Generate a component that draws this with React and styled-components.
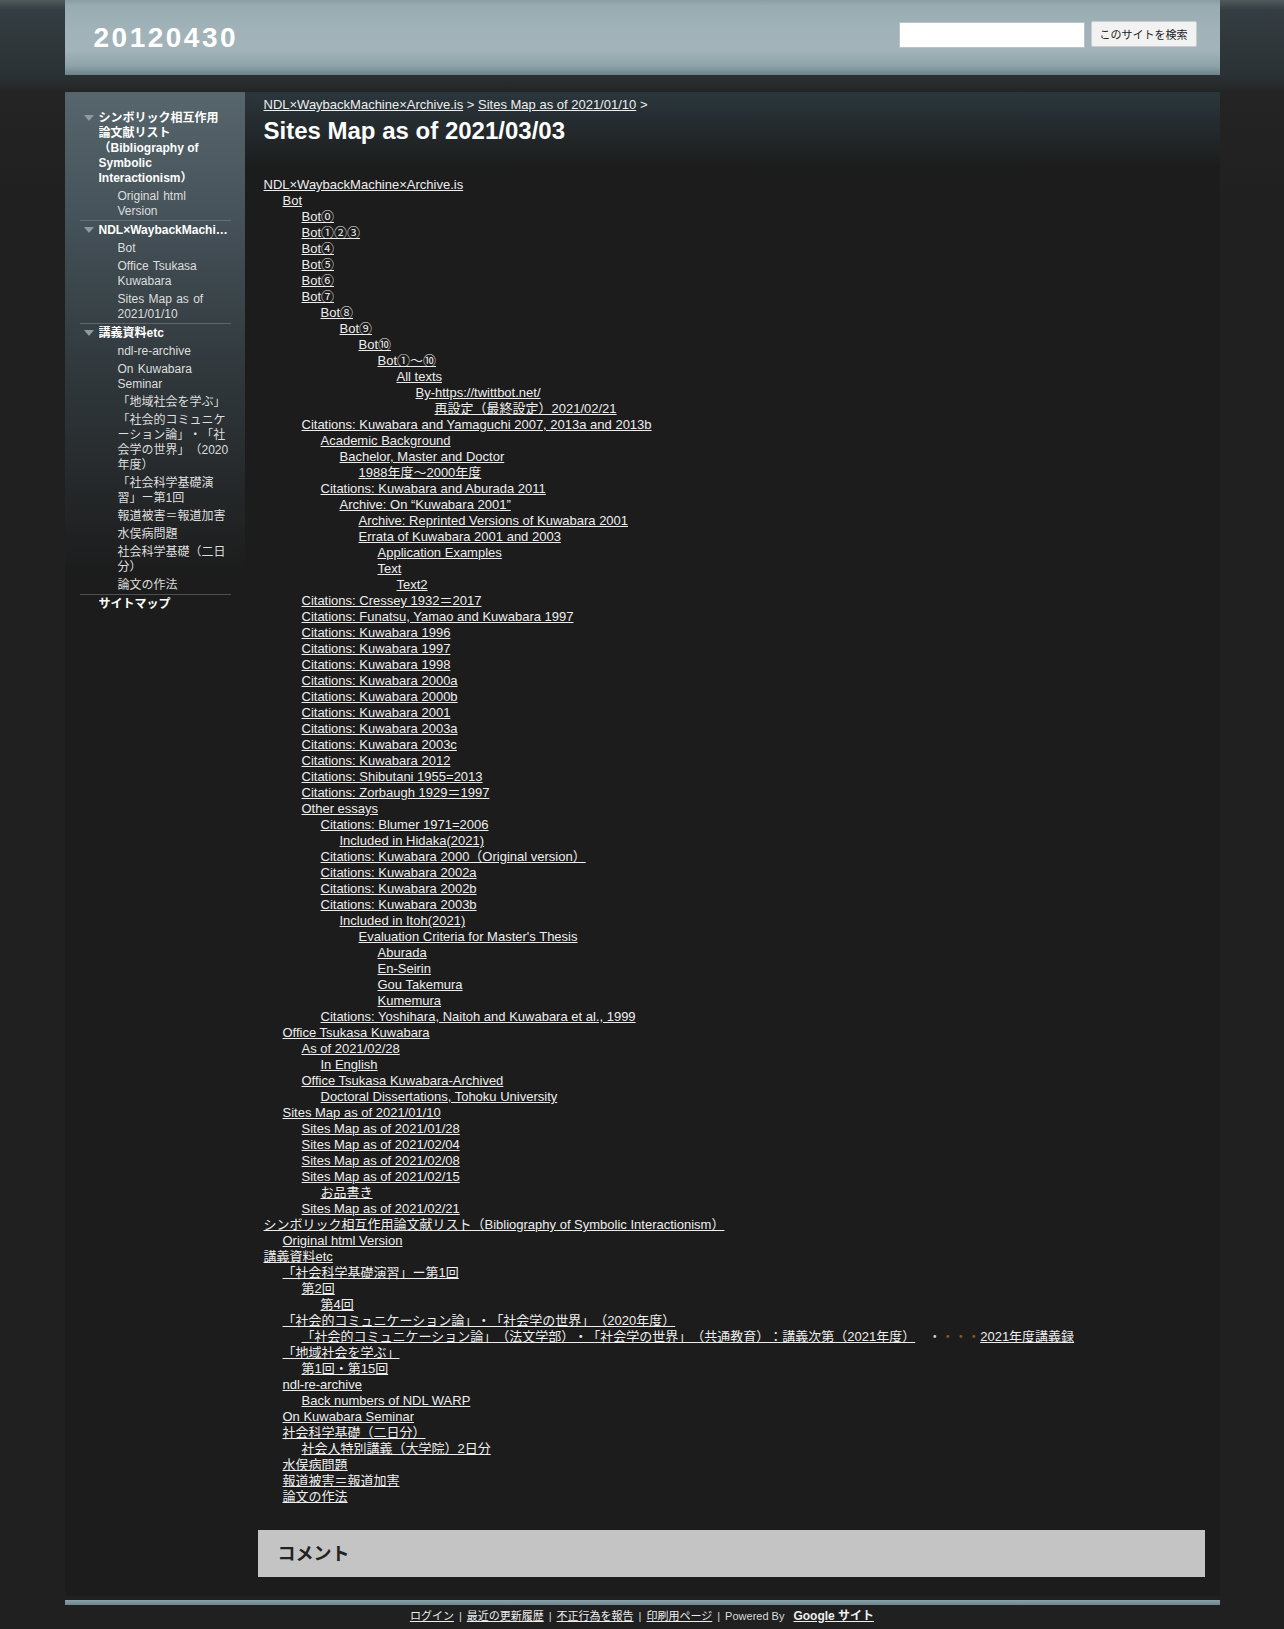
import React from 'react'
import styled, { createGlobalStyle } from 'styled-components'

const GlobalStyle = createGlobalStyle`
body{
  margin:0;
  background:#202020 linear-gradient(#52595c 0px,#343d42 10px,#2b3235 74px,#242424 92px,#202020 200px) no-repeat;
  font-family:"Liberation Sans","Noto Sans CJK JP",sans-serif;
  color:#eee;
  text-spacing-trim:space-all;
}
a{color:#eee;}
`;

const Header = styled.div`
width:1155px;
height:75px;
margin:0 auto;
box-sizing:border-box;
padding:0 23px 0 29px;
display:flex;
align-items:center;
justify-content:space-between;
background:linear-gradient(#8a9ea5 0px,#98acb2 6px,#a1b3b8 30px,#a2b4b9 50px,#8ea3a9 66px,#6c8389 75px);`;

const SiteTitle = styled.div`
font-size:28px;
font-weight:bold;
letter-spacing:2.5px;
color:#fff;`;

const SearchForm = styled.div`
display:flex;
gap:6px;
margin-bottom:6px;`;

const SearchInput = styled.input`
width:186px;
height:26px;
box-sizing:border-box;
border:1px solid #b8c3c7;
background:#fff;`;

const SearchButton = styled.button`
height:26px;
padding:0 8px;
margin-top:-1px;
border:1px solid #c9cccd;
border-radius:2px;
background:#f2f2f2;
color:#222;
font-size:11px;
font-family:"Liberation Sans","Noto Sans CJK JP",sans-serif;`;

const Main = styled.div`
width:1155px;
margin:17px auto 0;
display:flex;`;

const Sidebar = styled.div`
width:180px;
flex:none;
box-sizing:border-box;
padding:17px 14px 0 15px;
background:linear-gradient(#57666c 0px,#46535a 120px,#30383c 280px,#1c1c1c 480px);
font-size:12px;
line-height:15px;`;

const Section = styled.div`
border-bottom:${p => (p.$last ? 'none' : '1px solid rgba(150,160,165,0.4)')};`;

const TopItem = styled.div`
display:flex;
padding:1.5px 0;
font-weight:bold;
color:#fff;`;

const Arrow = styled.span`
width:19px;
height:15px;
flex:none;
display:flex;
align-items:center;
padding-left:4px;
box-sizing:border-box;`;

const TopText = styled.span`
flex:1;
min-width:0;
overflow:hidden;
text-overflow:ellipsis;
padding-right:2px;`;

const SubItem = styled.div`
padding:1.5px 2px 1.5px 38px;
word-spacing:1px;
color:#dedede;`;

const Content = styled.div`
flex:1;
box-sizing:border-box;
padding:5px 15px 19px 19px;
background:linear-gradient(#2b373d 0px,#1c1c1c 75px);
font-size:13px;
line-height:16px;`;

const Breadcrumb = styled.div`
color:#eee;`;

const PageTitle = styled.h1`
margin:4px 0 0;
font-size:24px;
line-height:28px;
font-weight:bold;
color:#fff;`;

const Tree = styled.div`
margin-top:32px;`;

const Row = styled.div`
padding-left:${p => p.$level * 19}px;
white-space:nowrap;`;

const Dot = styled.span`
color:${p => (p.$dim ? '#8a5a26' : '#cfcfcf')};`;

const CommentBox = styled.div`
margin:25px 0 0 -6px;
height:47px;
box-sizing:border-box;
padding:0 20px;
display:flex;
align-items:center;
background:#c4c4c4;
color:#222;
font-size:18px;
font-weight:bold;`;

const FooterBar = styled.div`
width:1155px;
height:5px;
margin:4px auto 0;
background:linear-gradient(#8aa2a8,#6b868e);`;

const Footer = styled.div`
display:flex;
justify-content:center;
align-items:center;
gap:5px;
padding:4px 0 6px;
font-size:11px;
line-height:14px;
color:#ddd;`;

const GoogleLink = styled.a`
font-weight:bold;
font-size:12px;
margin-left:4px;`;

const tree = [
  [0, 'NDL×WaybackMachine×Archive.is'],
  [1, 'Bot'],
  [2, 'Bot⓪'],
  [2, 'Bot①②③'],
  [2, 'Bot④'],
  [2, 'Bot⑤'],
  [2, 'Bot⑥'],
  [2, 'Bot⑦'],
  [3, 'Bot⑧'],
  [4, 'Bot⑨'],
  [5, 'Bot⑩'],
  [6, 'Bot①～⑩'],
  [7, 'All texts'],
  [8, 'By-https://twittbot.net/'],
  [9, '再設定（最終設定）2021/02/21'],
  [2, 'Citations: Kuwabara and Yamaguchi 2007, 2013a and 2013b'],
  [3, 'Academic Background'],
  [4, 'Bachelor, Master and Doctor'],
  [5, '1988年度～2000年度'],
  [3, 'Citations: Kuwabara and Aburada 2011'],
  [4, 'Archive: On “Kuwabara 2001”'],
  [5, 'Archive: Reprinted Versions of Kuwabara 2001'],
  [5, 'Errata of Kuwabara 2001 and 2003'],
  [6, 'Application Examples'],
  [6, 'Text'],
  [7, 'Text2'],
  [2, 'Citations: Cressey 1932＝2017'],
  [2, 'Citations: Funatsu, Yamao and Kuwabara 1997'],
  [2, 'Citations: Kuwabara 1996'],
  [2, 'Citations: Kuwabara 1997'],
  [2, 'Citations: Kuwabara 1998'],
  [2, 'Citations: Kuwabara 2000a'],
  [2, 'Citations: Kuwabara 2000b'],
  [2, 'Citations: Kuwabara 2001'],
  [2, 'Citations: Kuwabara 2003a'],
  [2, 'Citations: Kuwabara 2003c'],
  [2, 'Citations: Kuwabara 2012'],
  [2, 'Citations: Shibutani 1955=2013'],
  [2, 'Citations: Zorbaugh 1929＝1997'],
  [2, 'Other essays'],
  [3, 'Citations: Blumer 1971=2006'],
  [4, 'Included in Hidaka(2021)'],
  [3, 'Citations: Kuwabara 2000（Original version）'],
  [3, 'Citations: Kuwabara 2002a'],
  [3, 'Citations: Kuwabara 2002b'],
  [3, 'Citations: Kuwabara 2003b'],
  [4, 'Included in Itoh(2021)'],
  [5, "Evaluation Criteria for Master's Thesis"],
  [6, 'Aburada'],
  [6, 'En-Seirin'],
  [6, 'Gou Takemura'],
  [6, 'Kumemura'],
  [3, 'Citations: Yoshihara, Naitoh and Kuwabara et al., 1999'],
  [1, 'Office Tsukasa Kuwabara'],
  [2, 'As of 2021/02/28'],
  [3, 'In English'],
  [2, 'Office Tsukasa Kuwabara-Archived'],
  [3, 'Doctoral Dissertations, Tohoku University'],
  [1, 'Sites Map as of 2021/01/10'],
  [2, 'Sites Map as of 2021/01/28'],
  [2, 'Sites Map as of 2021/02/04'],
  [2, 'Sites Map as of 2021/02/08'],
  [2, 'Sites Map as of 2021/02/15'],
  [3, 'お品書き'],
  [2, 'Sites Map as of 2021/02/21'],
  [0, 'シンボリック相互作用論文献リスト（Bibliography of Symbolic Interactionism）'],
  [1, 'Original html Version'],
  [0, '講義資料etc'],
  [1, '「社会科学基礎演習」ー第1回'],
  [2, '第2回'],
  [3, '第4回'],
  [1, '「社会的コミュニケーション論」・「社会学の世界」（2020年度）'],
  [2, '「社会的コミュニケーション論」（法文学部）・「社会学の世界」（共通教育）：講義次第（2021年度）', true],
  [1, '「地域社会を学ぶ」'],
  [2, '第1回・第15回'],
  [1, 'ndl-re-archive'],
  [2, 'Back numbers of NDL WARP'],
  [1, 'On Kuwabara Seminar'],
  [1, '社会科学基礎（二日分）'],
  [2, '社会人特別講義（大学院）2日分'],
  [1, '水俣病問題'],
  [1, '報道被害＝報道加害'],
  [1, '論文の作法'],
]

const nav = [
  { title: 'シンボリック相互作用論文献リスト（Bibliography of Symbolic Interactionism）', items: ['Original html Version'] },
  { title: 'NDL×WaybackMachine×Archive.is', items: ['Bot', 'Office Tsukasa Kuwabara', 'Sites Map as of 2021/01/10'] },
  {
    title: '講義資料etc',
    items: ['ndl-re-archive', 'On Kuwabara Seminar', '「地域社会を学ぶ」', '「社会的コミュニケーション論」・「社会学の世界」（2020年度）',
      '「社会科学基礎演習」ー第1回', '報道被害＝報道加害', '水俣病問題', '社会科学基礎（二日分）', '論文の作法'],
  },
]

const Triangle = () => (
  <svg width="10" height="6" viewBox="0 0 10 6">
    <path d="M0 0 L10 0 L5 6 Z" fill="#8d9a9f" />
  </svg>
)

const App = () => {
  return (
    <>
      <GlobalStyle />
      <Header>
        <SiteTitle>20120430</SiteTitle>
        <SearchForm>
          <SearchInput />
          <SearchButton>このサイトを検索</SearchButton>
        </SearchForm>
      </Header>
      <Main>
        <Sidebar>
          {nav.map(sec => (
            <Section key={sec.title}>
              <TopItem>
                <Arrow><Triangle /></Arrow>
                <TopText>{sec.title}</TopText>
              </TopItem>
              {sec.items.map(it => <SubItem key={it}>{it}</SubItem>)}
            </Section>
          ))}
          <Section $last>
            <TopItem>
              <Arrow />
              <TopText>サイトマップ</TopText>
            </TopItem>
          </Section>
        </Sidebar>
        <Content>
          <Breadcrumb>
            <a href="#">NDL×WaybackMachine×Archive.is</a> &gt; <a href="#">Sites Map as of 2021/01/10</a> &gt;
          </Breadcrumb>
          <PageTitle>Sites Map as of 2021/03/03</PageTitle>
          <Tree>
            {tree.map(([level, text, extra], i) => (
              <Row key={i} $level={level}>
                <a href="#">{text}</a>
                {extra && (
                  <>
                    <Dot>　・</Dot><Dot $dim>・・・</Dot><a href="#">2021年度講義録</a>
                  </>
                )}
              </Row>
            ))}
          </Tree>
          <CommentBox>コメント</CommentBox>
        </Content>
      </Main>
      <FooterBar />
      <Footer>
        <a href="#">ログイン</a>|<a href="#">最近の更新履歴</a>|<a href="#">不正行為を報告</a>|<a href="#">印刷用ページ</a>|<span>Powered By</span>
        <GoogleLink href="#">Google サイト</GoogleLink>
      </Footer>
    </>
  )
}

export default App
